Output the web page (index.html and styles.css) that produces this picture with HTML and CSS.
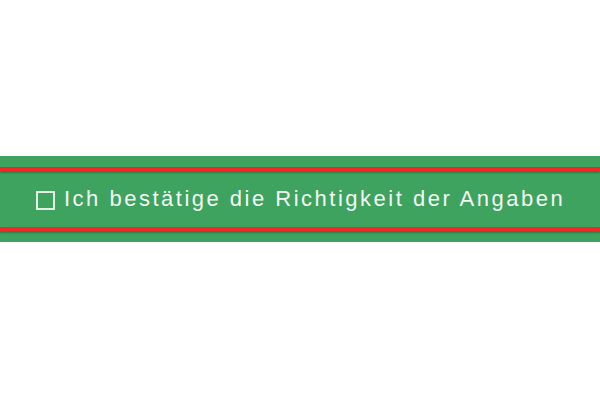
FILE: index.html
```html
<!DOCTYPE html>
<html>
<head>
<meta charset="utf-8">
<link rel="stylesheet" href="styles.css">
</head>
<body>
<div class="page">
  <div class="band">
    <div class="line"></div>
    <label class="confirm"><span class="box"></span><span class="text">Ich bestätige die Richtigkeit der Angaben</span></label>
    <div class="line"></div>
  </div>
</div>
</body>
</html>
```
FILE: styles.css
```css
html, body {
  margin: 0;
  padding: 0;
  background: #ffffff;
}
.page {
  width: 600px;
  height: 400px;
  display: flex;
  flex-direction: column;
  justify-content: center;
}
.band {
  background: #3da35f;
  padding: 11px 0 11px;
  display: flex;
  flex-direction: column;
  margin-top: -2px;
}
.line {
  height: 4px;
  background: #f0282a;
  box-shadow: 0 2px 2px rgba(0, 60, 20, 0.35);
}
.confirm {
  height: 56px;
  display: flex;
  align-items: center;
  padding-left: 36px;
  gap: 9px;
  font-family: "Liberation Sans", Arial, sans-serif;
  font-size: 22px;
  letter-spacing: 2.5px;
  color: #f4f8f4;
}
.box {
  width: 15px;
  height: 15px;
  border: 2px solid #e4efe6;
  margin-top: 2px;
  flex: none;
}
```
